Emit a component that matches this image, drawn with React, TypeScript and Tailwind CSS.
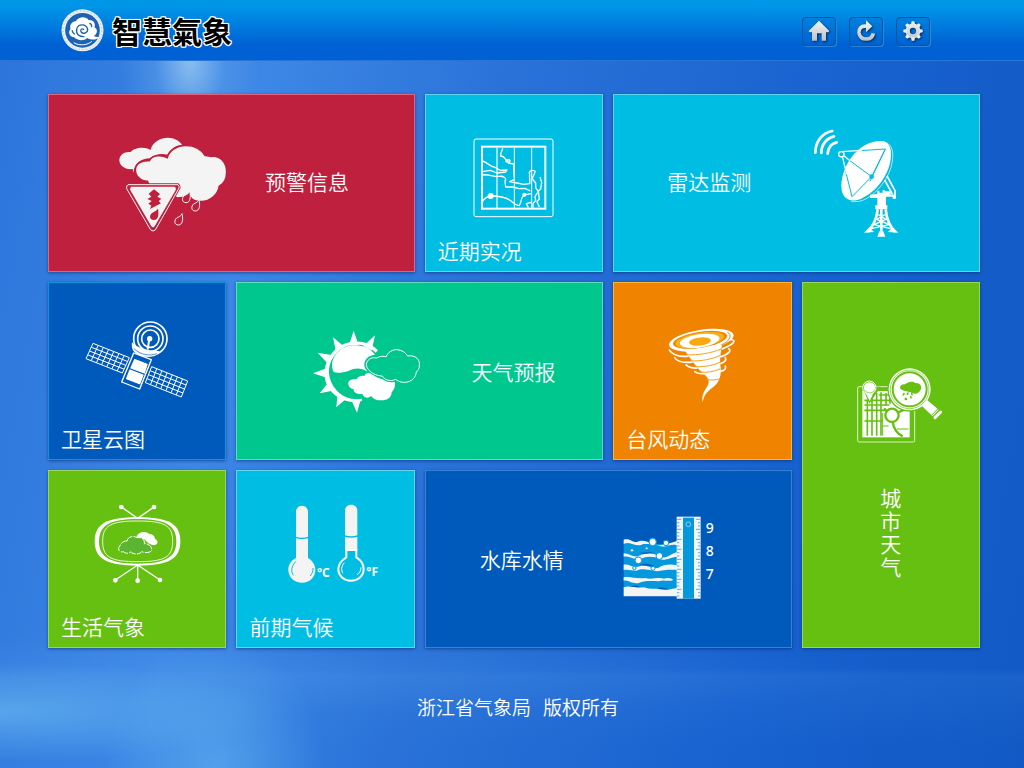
import type { ReactNode } from "react";

/* ---------- geometry helpers ---------- */

function meshPath(
  [ox, oy]: number[],
  [ux, uy]: number[],
  [vx, vy]: number[],
  cols: number,
  rows: number
) {
  let d = "";
  for (let i = 0; i <= cols; i++) {
    const t = i / cols;
    d += `M${ox + ux * t} ${oy + uy * t}l${vx} ${vy}`;
  }
  for (let j = 0; j <= rows; j++) {
    const t = j / rows;
    d += `M${ox + vx * t} ${oy + vy * t}l${ux} ${uy}`;
  }
  return d;
}

function rayPath(cx: number, cy: number, r: number, half: number, tips: number[][]) {
  return tips
    .map(([x, y]) => {
      const a = Math.atan2(y - cy, x - cx);
      const bx = cx + Math.cos(a) * r;
      const by = cy + Math.sin(a) * r;
      const px = -Math.sin(a) * half;
      const py = Math.cos(a) * half;
      return `M${x} ${y}L${bx + px} ${by + py}L${bx - px} ${by - py}Z`;
    })
    .join("");
}

/* ---------- header drawings ---------- */

function Emblem() {
  return (
    <svg viewBox="64 23 128 129" className="h-[43px] w-[43px]" aria-hidden="true">
      <circle cx="128" cy="87" r="63" fill="#e9eef2" />
      <circle cx="128" cy="87" r="58" fill="none" stroke="#b4c3cf" strokeWidth="3" strokeDasharray="4 7" />
      <circle cx="128" cy="87" r="52" fill="#1c63b4" />
      <path
        fill="#fff"
        d="M103 108C88 106 84 92 92 83C88 68 100 60 108 60C116 44 140 44 146 56C162 54 168 68 164 78C176 84 172 100 162 104C168 108 176 108 180 106C168 118 154 116 142 110C132 120 112 118 103 108Z"
      />
      <path
        fill="none"
        stroke="#1c63b4"
        strokeWidth="4"
        strokeLinecap="round"
        d="M131 84C126 80 120 86 124 92C130 100 146 94 143 82C139 68 116 66 111 82C107 98 118 106 132 106M97 88C98 94 100 96 104 98M150 66C154 68 156 72 155 76"
      />
      <path fill="none" stroke="#fff" strokeWidth="3" d="M102 124C120 135 144 131 156 120" />
    </svg>
  );
}

function ToolIcon({ view, children }: { view: string; children: ReactNode }) {
  return (
    <svg viewBox={view} className="h-[22px] w-[22px] drop-shadow-[1px_1px_1px_#00000099]" aria-hidden="true">
      <defs>
        <linearGradient id="metal" gradientUnits="userSpaceOnUse" x1="0" y1="48" x2="0" y2="110">
          <stop offset="0" stopColor="#f4f4f4" />
          <stop offset="1" stopColor="#bcc0c6" />
        </linearGradient>
      </defs>
      {children}
    </svg>
  );
}

function HomeIcon() {
  return (
    <ToolIcon view="54 46 66 66">
      <path fill="url(#metal)" d="M87 48L118 79L115 83H108V108H95V86H81V108H66V83H59L56 79Z" />
    </ToolIcon>
  );
}

function ReloadIcon() {
  return (
    <ToolIcon view="195 46 66 66">
      <path fill="none" stroke="url(#metal)" strokeWidth="11" d="M231 65C213 61 206 74 207 84C209 98 219 103 229 103C241 103 248 96 250 86" />
      <path fill="url(#metal)" d="M228 47L247 65L228 83Z" />
    </ToolIcon>
  );
}

function GearIcon() {
  return (
    <ToolIcon view="335 46 66 66">
      <circle cx="368" cy="79" r="16" fill="none" stroke="url(#metal)" strokeWidth="13" />
      {[0, 45, 90, 135, 180, 225, 270, 315].map((a) => (
        <path key={a} fill="url(#metal)" d="M362 60L364 50H372L374 60Z" transform={`rotate(${a} 368 79)`} />
      ))}
    </ToolIcon>
  );
}

/* ---------- tile drawings ---------- */

const DROP = "M10-17C14 0 12 17-1 17C-14 17-14 2-6-4C2-8 8-11 10-17Z";

function WarningArt() {
  return (
    <svg viewBox="57 51 324 288" className="h-[96px] w-[108px] shrink-0" aria-hidden="true">
      <path
        fill="#f4f4f4"
        d="M98 147C76 150 58 138 58 121C58 104 74 94 92 96C102 82 134 78 152 90C156 66 182 53 204 53C222 53 238 62 246 74C226 76 210 88 202 104C186 100 164 102 150 115C124 116 104 128 100 158Z"
      />
      <path
        fill="#f4f4f4"
        stroke="#bf203e"
        strokeWidth="5"
        d="M106 150C106 131 124 120 148 122C156 106 184 102 201 113C208 92 230 76 258 76C286 76 304 88 315 106C322 105 330 110 334 109C360 105 380 127 380 156C380 178 369 193 358 199C354 225 330 244 304 245C286 245 274 238 270 230C256 234 246 232 232 234L148 194C142 190 146 188 142 184C122 184 106 168 106 150Z"
      />
      <path
        fill="#bf203e"
        stroke="#bf203e"
        strokeWidth="8"
        d="M84 194H234Q240 200 236 206L166 330Q159 336 152 330L80 206Q78 196 84 194Z"
      />
      <path
        fill="#bf203e"
        stroke="#f4f4f4"
        strokeWidth="3"
        d="M84 194H234Q240 200 236 206L166 330Q159 336 152 330L80 206Q78 196 84 194Z"
      />
      <path fill="#f4f4f4" d="M94 200H224Q230 204 226 212L164 319Q159 325 154 319L92 212Q88 204 94 200Z" />
      <path fill="#bf203e" d="M162 208L180 222L172 230L184 236L176 244L183 250L150 267L154 257L145 251L155 243L142 237L154 230L146 221Z" />
      <path fill="#bf203e" d="M174 266C177 280 176 300 162 300C148 300 147 286 156 279C164 274 170 272 174 266Z" />
      {[
        [259, 231],
        [287, 256],
        [236, 298],
      ].map(([x, y]) => (
        <path key={x} d={DROP} transform={`translate(${x} ${y})`} fill="#bf203e" stroke="#f4f4f4" strokeWidth="3" />
      ))}
    </svg>
  );
}

function MapArt() {
  return (
    <svg viewBox="144 53 243 240" className="h-[80px] w-[81px]" fill="none" stroke="#fff" aria-hidden="true">
      <rect x="147" y="56" width="237" height="233" rx="6" strokeWidth="3" />
      <rect x="171" y="79" width="190" height="186" strokeWidth="6" />
      <path d="M216 82V263" strokeWidth="5" opacity=".7" />
      <path d="M268 82V263M320 82V263" strokeWidth="3" />
      <g strokeWidth="4" strokeLinejoin="round">
        <path d="M233 84C232 92 224 100 228 108C240 106 238 118 246 120C256 114 258 122 250 128L266 131V150L268 172" />
        <path d="M172 122C188 126 196 140 208 140L226 150L246 149L242 155L216 158L196 150L172 154" />
        <path d="M172 164C190 160 204 170 222 168C236 166 246 174 240 182L242 200L264 200L282 205L300 204L316 212" />
        <path d="M268 178L254 184L276 188L296 192L314 190C316 180 312 172 314 162C310 152 320 148 330 152C332 160 322 166 322 176L332 188V202L340 214L330 228L332 240L324 250V262" />
        <path d="M345 170L350 186L347 206L340 212L343 236L336 244L343 260M318 246L304 250L310 262" />
        <path d="M172 244C180 230 190 226 206 227C226 228 240 230 252 238C264 244 268 256 282 256C290 250 286 230 298 224L318 220" />
      </g>
      <circle cx="197" cy="227" r="9" fill="#fff" stroke="none" />
      <circle cx="298" cy="223" r="6" fill="#fff" stroke="none" />
      <circle cx="246" cy="122" r="5" fill="#fff" stroke="none" />
    </svg>
  );
}

function RadarArt() {
  return (
    <svg viewBox="489 55 258 324" className="h-[108px] w-[86px] shrink-0" aria-hidden="true">
      <g fill="none" stroke="#fff" strokeWidth="8" strokeLinecap="round">
        <path d="M496 126C496 92 518 66 547 61" />
        <path d="M514 127C514 102 530 82 552 77" />
        <path d="M533 129C534 112 544 99 560 95" />
      </g>
      <path
        fill="#fff"
        d="M686 91C714 88 728 108 722 146C716 196 676 246 634 264C606 276 580 268 575 238C570 204 586 160 612 130C634 106 660 93 686 91Z"
      />
      <path fill="none" stroke="#fff" strokeWidth="2" d="M700 93C724 98 732 118 727 152C720 202 678 254 636 270C622 274 610 274 602 271" />
      <g fill="none" stroke="#00bde4" strokeWidth="3">
        <path d="M612 121L706 115L665 198L606 258L575 136M578 134L665 198M706 115L660 212" />
      </g>
      <path fill="none" stroke="#fff" strokeWidth="4" d="M574 123L636 119M577 137L590 190M580 134L600 150" />
      <circle cx="574" cy="131" r="8" fill="#00bde4" stroke="#fff" strokeWidth="4" />
      <circle cx="665" cy="198" r="7" fill="#00bde4" />
      <path fill="none" stroke="#fff" strokeWidth="5" d="M711 196L735 240V262M704 208L728 252" />
      <path fill="#fff" d="M660 252L682 250V240H688V246H698V238H704V242H722V252H738V264H728V258H708V284H712V296H676V284H682V262H660Z" />
      <path fill="none" stroke="#fff" strokeWidth="8" d="M683 296C680 328 666 350 652 364M707 296C710 328 722 350 736 364M694 296V374" />
      <path fill="none" stroke="#fff" strokeWidth="4" d="M682 310L708 326L672 342L722 354M708 310L680 326L718 342L664 354" />
      <path fill="#fff" d="M642 366L658 350L672 364ZM682 378L688 362H700L706 378ZM714 364L728 350L745 366Z" />
    </svg>
  );
}

function SatelliteArt() {
  return (
    <svg viewBox="110 62 312 234" className="h-[78px] w-[104px]" aria-hidden="true">
      <g fill="none" stroke="#fff" strokeWidth="3">
        <path d={meshPath([134, 129], [109, 43], [-21, 46], 7, 4)} />
        <path d={meshPath([310, 199], [108, 43], [-19, 48], 7, 4)} />
      </g>
      <path fill="#005abb" stroke="#fff" strokeWidth="4" strokeLinejoin="round" d="M256 158L309 178L274 266L220 245Z" />
      <path fill="#fff" stroke="#fff" strokeWidth="4" strokeLinejoin="round" d="M259 178L296 192L288 218L248 203ZM245 209L284 224L274 250L235 235Z" />
      <circle cx="306" cy="115" r="50" fill="#005abb" stroke="#fff" strokeWidth="5" />
      <circle cx="306" cy="115" r="38" fill="none" stroke="#fff" strokeWidth="5" />
      <circle cx="306" cy="115" r="26" fill="none" stroke="#fff" strokeWidth="5" />
      <path fill="#fff" d="M251 126C268 144 304 154 334 152C326 178 268 174 254 150C250 142 250 134 251 126Z" />
      <path fill="none" stroke="#005abb" strokeWidth="2" d="M256 144C276 164 304 168 326 160" />
      <circle cx="304" cy="115" r="8" fill="#fff" />
      <path stroke="#fff" strokeWidth="6" d="M303 115L298 148" />
    </svg>
  );
}

function ForecastArt() {
  const cloud =
    "M262 138C266 124 282 116 294 117C308 118 318 124 326 136C350 132 364 148 361 164C362 174 356 180 352 184C350 206 330 216 314 215C302 215 296 210 290 206C276 214 256 208 250 196C232 196 206 184 202 164C202 148 216 138 232 142C244 136 254 136 262 138Z";
  return (
    <svg viewBox="42 58 324 249" className="h-[83px] w-[108px] shrink-0" aria-hidden="true">
      <path
        fill="#fff"
        d={rayPath(165, 185, 80, 15, [
          [164, 60],
          [228, 74],
          [102, 80],
          [56, 126],
          [42, 188],
          [62, 248],
          [112, 290],
          [174, 306],
        ])}
      />
      <circle cx="168" cy="185" r="82" fill="#00c78e" />
      <path fill="#fff" d="M237 119C204 84 142 82 104 121C64 166 68 226 114 258C138 273 164 277 189 271V264C160 268 138 262 120 246C84 212 80 166 110 130C142 94 196 92 230 126Z" />
      <path
        fill="#fff"
        d="M104 184C88 150 116 106 164 104C196 103 214 114 228 132C206 134 195 148 196 166C198 174 202 178 206 184C186 170 168 172 150 180C130 187 114 188 104 184Z"
      />
      <path
        fill="#fff"
        d="M148 220C146 208 160 204 172 206C178 196 190 194 196 196C200 188 210 184 218 188C232 202 246 206 256 206C264 216 276 216 288 214C288 224 288 236 278 244C278 262 262 270 246 269C230 270 222 262 216 256C206 266 194 260 190 250C176 252 162 246 164 236C154 234 148 228 148 220Z"
      />
      <path d={cloud} fill="#00c78e" stroke="#00c78e" strokeWidth="9" />
      <path d={cloud} fill="none" stroke="#fff" strokeWidth="3" />
    </svg>
  );
}

function TyphoonArt() {
  return (
    <svg viewBox="166 50 204 224" className="h-[75px] w-[68px]" aria-hidden="true">
      <path fill="#fff" d="M212 112L330 92C324 122 320 144 324 168C328 214 302 226 290 236C276 248 274 256 270 272C264 244 284 232 288 214C292 196 268 186 254 168C238 150 224 128 212 112Z" />
      <ellipse cx="266" cy="86" rx="98" ry="31" transform="rotate(-9 266 86)" fill="#fff" />
      <ellipse cx="262" cy="85" rx="82" ry="24" transform="rotate(-9 262 85)" fill="#f08300" />
      <ellipse cx="261" cy="86" rx="74" ry="22" transform="rotate(-9 261 86)" fill="#f9b01a" />
      <ellipse cx="261" cy="88" rx="60" ry="20" transform="rotate(-8 261 88)" fill="#fff" />
      <ellipse cx="262" cy="90" rx="33" ry="12" transform="rotate(-6 262 90)" fill="#f9a80f" />
      <path fill="none" stroke="#f08300" strokeWidth="3" d="M344 62C360 70 352 90 326 100" />
      <g fill="none" stroke="#f6a21a" strokeWidth="3">
        <path d="M222 130C256 132 300 124 326 112M234 148C266 150 300 142 322 132M248 166C278 166 302 162 322 152M262 182C284 184 306 180 322 172M282 204C296 206 310 206 322 202" />
      </g>
      <g fill="none" stroke="#fff" strokeWidth="5" strokeLinecap="round">
        <path d="M170 116C180 132 204 136 226 134M354 84C372 86 366 96 330 112" />
        <path d="M186 138C192 150 214 154 238 152M348 112C358 116 348 128 324 136" />
        <path d="M220 160C226 168 238 170 252 170M338 138C342 146 336 152 324 156" />
        <path d="M246 180C252 186 262 188 278 186M338 164C342 172 334 178 322 180" />
      </g>
    </svg>
  );
}

function CityArt() {
  return (
    <svg viewBox="53 52 258 228" className="h-[76px] w-[86px]" aria-hidden="true">
      <rect x="55" y="111" width="171" height="166" rx="4" fill="none" stroke="#d9f2c0" strokeWidth="3" />
      <rect x="69" y="124" width="142" height="139" fill="#fff" />
      <g stroke="#66c012" fill="none">
        <path strokeWidth="5" d="M84 150V258M98 135V258M112 130V258M125 128V258M140 130V168M152 140V162" />
        <path strokeWidth="5" d="M75 152H166M75 166H150M75 182H138M75 214H130M118 136H160" />
        <path strokeWidth="7" d="M196 180L176 188M160 216C162 238 176 254 190 260M134 176L142 184" />
        <path strokeWidth="3" d="M130 229H148M172 238H208M130 190V258" />
      </g>
      <circle cx="158" cy="197" r="20" fill="#fff" stroke="#66c012" strokeWidth="7" />
      <path fill="#66c012" d="M66 106L90 162L124 112Z" />
      <circle cx="90" cy="114" r="20" fill="#66c012" stroke="#fff" strokeWidth="3" />
      <path fill="#fff" d="M91 154L75 122C70 106 80 98 90 98C102 98 111 108 106 122Z" />
      <path fill="none" stroke="#66c012" strokeWidth="2" d="M77 122C82 132 100 132 105 122" />
      <circle cx="211" cy="119" r="67" fill="#66c012" />
      <circle cx="211" cy="119" r="63" fill="#fff" />
      <circle cx="211" cy="119" r="58" fill="none" stroke="#66c012" strokeWidth="2" />
      <circle cx="211" cy="119" r="51" fill="none" stroke="#66c012" strokeWidth="6" />
      <path fill="#66c012" d="M182 114C182 106 190 102 198 104C206 94 222 94 228 100C240 98 248 108 245 118C240 132 226 136 214 128C204 124 184 124 182 114Z" />
      <path stroke="#66c012" strokeWidth="5" strokeLinecap="round" d="M194 132L192 136M206 130L204 134M217 131L218 135M199 146L198 149M214 141L215 144M202 148L201 149" />
      <path fill="#fff" d="M247 168L263 151L298 180L280 200Z" />
      <path stroke="#66c012" strokeWidth="3" d="M276 198L298 175" />
      <path stroke="#fff" strokeWidth="9" strokeLinecap="round" d="M287 204L304 187" />
    </svg>
  );
}

function TvArt() {
  return (
    <svg viewBox="137 43 261 237" className="h-[79px] w-[87px]" aria-hidden="true">
      <path fill="none" stroke="#fff" strokeWidth="4" d="M219 52L268 86L317 52M201 271L268 226L335 271M268 226V272" />
      {[
        [219, 52],
        [317, 52],
        [201, 272],
        [268, 273],
        [335, 271],
      ].map(([x, y]) => (
        <circle key={`${x}-${y}`} cx={x} cy={y} r="7" fill="#fff" />
      ))}
      <path fill="#fff" d="M268 83C360 83 396 102 396 155C396 208 360 228 268 228C176 228 139 208 139 155C139 102 176 83 268 83Z" />
      <path fill="#66c012" d="M268 88C350 88 384 106 384 155C384 204 350 222 268 222C186 222 152 204 152 155C152 106 186 88 268 88Z" />
      <path fill="none" stroke="#fff" strokeWidth="2.5" d="M268 94C350 94 373 108 373 155C373 202 350 216 268 216C186 216 163 202 163 155C163 108 186 94 268 94Z" />
      <path fill="#fff" d="M264 142C270 126 292 122 304 134C312 132 320 140 320 148C330 152 330 164 320 166C306 166 296 158 290 150Z" />
      <path
        fill="#5cb531"
        stroke="#fff"
        strokeWidth="3"
        strokeDasharray="22 4"
        d="M236 154C238 140 256 138 266 144C280 142 290 150 288 162C302 162 312 172 310 182C306 190 290 190 280 186C276 194 254 196 248 186C240 194 228 190 226 186C214 190 206 178 214 170C218 158 228 154 236 154Z"
      />
    </svg>
  );
}

function ThermometerArt() {
  return (
    <svg viewBox="152 46 273 240" className="h-[80px] w-[91px]" aria-hidden="true">
      <path fill="#f4f4f4" d="M176 70C176 45 212 45 212 70V144Q194 150 176 144ZM176 149Q194 154 212 149V208C222 214 234 226 234 243C234 266 216 282 194 282C172 282 153 266 153 243C153 226 164 214 176 208Z" />
      <path fill="none" stroke="#00bde4" strokeWidth="3" d="M176 218C162 232 160 248 168 260M227 238C228 248 224 256 218 262" />
      <path fill="#f4f4f4" d="M323 66C323 42 360 42 360 66V140Q342 146 323 140ZM323 145Q342 150 360 145V186H323Z" />
      <path
        fill="#00bde4"
        stroke="#fff"
        strokeWidth="6"
        strokeLinejoin="round"
        d="M327 184H357V206C370 214 379 226 379 241C379 262 362 276 341 276C320 276 303 262 303 241C303 226 314 214 327 206Z"
      />
      <path fill="none" stroke="#fff" strokeWidth="3" d="M321 222C311 234 311 246 317 254M371 236C371 247 366 254 359 258" />
      <text x="239" y="264" fill="#fff" fontSize="36" fontWeight="700" fontFamily="'Noto Sans', sans-serif">
        °C
      </text>
      <text x="387" y="261" fill="#fff" fontSize="36" fontWeight="700" fontFamily="'Noto Sans', sans-serif">
        °F
      </text>
    </svg>
  );
}

function WaterArt() {
  const ticks = Array.from({ length: 24 }, (_, i) => {
    const y = 56 + i * 10;
    const w = i % 3 === 0 ? 13 : 7;
    return `M651 ${y}h${w}M721 ${y}h${-w}`;
  }).join("");
  return (
    <svg viewBox="489 46 234 249" className="h-[83px] w-[78px] shrink-0" aria-hidden="true">
      <path fill="#0598dc" d="M491 130H651V266H491Z" />
      <g fill="#f4f4f4">
        <path d="M491 117C512 112 516 126 530 124C548 116 560 122 574 128C600 140 620 130 651 121V134C630 128 622 142 600 136C580 130 568 130 550 130C530 142 512 122 491 130Z" />
        <path d="M491 158C508 158 520 172 536 166C560 156 580 156 600 168C620 178 632 158 651 155V168C630 170 620 180 600 176C580 166 560 166 540 176C520 176 506 166 491 168Z" />
        <path d="M491 192C510 190 516 202 534 198C556 190 572 204 594 202C614 190 632 190 651 194V208C630 206 610 208 590 212C566 208 546 202 530 210C514 210 506 206 491 208Z" />
        <path d="M491 230C512 226 530 236 556 232C574 238 596 228 612 234C624 230 636 234 640 238C624 244 610 236 596 242C570 240 550 240 534 248C512 248 504 238 491 240Z" />
        <path d="M491 260C510 252 526 264 552 260C572 268 590 262 604 266C622 270 636 264 651 262V287H491Z" />
      </g>
      <g fill="#005abb">
        <path d="M538 154C550 158 562 152 580 156L548 160ZM540 192C556 186 570 190 588 198L552 194ZM508 258L530 254L540 260ZM590 262C606 258 616 262 628 266L600 266Z" />
      </g>
      <g fill="#fff" stroke="#0598dc" strokeWidth="3">
        <circle cx="578" cy="124" r="11" />
        <circle cx="618" cy="127" r="8" />
        <circle cx="598" cy="166" r="10" />
        <circle cx="535" cy="179" r="10" />
        <circle cx="516" cy="149" r="5" />
        <circle cx="560" cy="143" r="4" />
        <circle cx="523" cy="202" r="5" />
        <circle cx="579" cy="203" r="6" />
      </g>
      <rect x="650" y="48" width="72" height="246" fill="#f4f4f4" />
      <rect x="669" y="51" width="33" height="243" fill="#0598dc" />
      <path d={ticks} stroke="#4db5e4" strokeWidth="3" />
      <circle cx="685" cy="71" r="7" fill="none" stroke="#bfe6f7" strokeWidth="2" />
    </svg>
  );
}

/* ---------- tiles ---------- */

const TILE =
  "border shadow-[0_1px_3px_#00206088] outline-none hover:brightness-110 focus-visible:ring-2 focus-visible:ring-white";
const LABEL = "text-[21px] leading-[21px] whitespace-nowrap";

function WideTile({ tone, children }: { tone: string; children: ReactNode }) {
  return (
    <a href="#" className={`${TILE} ${tone} col-span-2 flex items-center`}>
      {children}
    </a>
  );
}

function SquareTile({ tone, label, children }: { tone: string; label: string; children: ReactNode }) {
  return (
    <a href="#" className={`${TILE} ${tone} flex flex-col px-3 pb-[10px]`}>
      <span className="flex flex-1 items-center justify-center">{children}</span>
      <span className={LABEL}>{label}</span>
    </a>
  );
}

const TOOLS = [
  { name: "首页", icon: <HomeIcon /> },
  { name: "刷新", icon: <ReloadIcon /> },
  { name: "设置", icon: <GearIcon /> },
];

export default function App() {
  return (
    <div className="flex min-h-screen flex-col bg-[radial-gradient(ellipse_70px_120px_at_190px_60px,#b4dcf5aa,#7ab8ee44_50%,transparent),radial-gradient(ellipse_280px_50px_at_0px_712px,#69b8f0aa,transparent),radial-gradient(ellipse_110px_130px_at_215px_768px,#5fb0efaa,transparent),radial-gradient(ellipse_700px_40px_at_200px_675px,#5fa5ee33,transparent),linear-gradient(to_bottom,transparent_87%,#4f98e822_88%,transparent_97%),linear-gradient(100deg,#2c74da_0%,#3d87e6_24%,#2a72d8_45%,#1762cf_75%,#1259c4_100%)] font-['Noto_Sans_CJK_SC',sans-serif] font-[350] text-white">
      <header className="flex h-[61px] items-center justify-between border-b border-[#2a74d6] bg-linear-to-b from-[#0096e8] from-10% to-[#0061d4] to-75% pr-[94px] pl-[61px]">
        <div className="flex items-center gap-2">
          <Emblem />
          <h1 className="text-[30px] leading-10 font-bold text-black [text-shadow:1px_0_#fff,-1px_0_#fff,0_1px_#fff,0_-1px_#fff,1px_1px_#fff,-1px_-1px_#fff,1px_-1px_#fff,-1px_1px_#fff,0_0_2px_#fff]">
            智慧氣象
          </h1>
        </div>
        <nav className="flex gap-[13px] pt-[2px]">
          {TOOLS.map((tool) => (
            <button
              key={tool.name}
              type="button"
              aria-label={tool.name}
              className="flex h-[29px] w-[34px] items-center justify-center rounded-sm border border-[#0a559f] bg-[#0060c022] shadow-[1px_1px_0_#2f84da]"
            >
              {tool.icon}
            </button>
          ))}
        </nav>
      </header>

      <main className="grid auto-rows-[178px] grid-cols-5 gap-[10px] pt-[33px] pr-11 pl-12">
        <WideTile tone="bg-[#bf203e] border-[#e2647c]">
          <span className="pt-1 pr-[38px] pl-[70px]">
            <WarningArt />
          </span>
          <span className={`${LABEL} pb-1`}>预警信息</span>
        </WideTile>
        <SquareTile tone="bg-[#00bde4] border-[#5fd6ef]" label="近期实况">
          <span className="pt-5">
            <MapArt />
          </span>
        </SquareTile>
        <WideTile tone="bg-[#00bde4] border-[#5fd6ef]">
          <span className={`${LABEL} pr-[62px] pb-1 pl-[53px]`}>雷达监测</span>
          <RadarArt />
        </WideTile>

        <SquareTile tone="bg-[#005abb] border-[#0f92de]" label="卫星云图">
          <span className="pt-2">
            <SatelliteArt />
          </span>
        </SquareTile>
        <WideTile tone="bg-[#00c78e] border-[#5fdcb8]">
          <span className="pr-[50px] pl-[76px]">
            <ForecastArt />
          </span>
          <span className={LABEL}>天气预报</span>
        </WideTile>
        <SquareTile tone="bg-[#f08300] border-[#fdb52c]" label="台风动态">
          <span className="pt-5">
            <TyphoonArt />
          </span>
        </SquareTile>
        <a
          href="#"
          className={`${TILE} row-span-2 flex flex-col items-center gap-[43px] border-[#98d65a] bg-[#66c012] pt-[84px]`}
        >
          <span className="pl-[18px]">
            <CityArt />
          </span>
          <span className="w-[21px] text-[21px] leading-[23px] break-all">城市天气</span>
        </a>

        <SquareTile tone="bg-[#66c012] border-[#98d65a]" label="生活气象">
          <TvArt />
        </SquareTile>
        <SquareTile tone="bg-[#00bde4] border-[#5fd6ef]" label="前期气候">
          <span className="pl-4">
            <ThermometerArt />
          </span>
        </SquareTile>
        <WideTile tone="bg-[#005abb] border-[#3482d4]">
          <span className={`${LABEL} pr-[59px] pl-[54px]`}>水库水情</span>
          <span className="pb-1">
            <WaterArt />
          </span>
          <span className="flex flex-col pb-[18px] pl-[5px] font-['Noto_Sans',sans-serif] text-sm leading-[23px] font-medium">
            <span>9</span>
            <span>8</span>
            <span>7</span>
          </span>
        </WideTile>
      </main>

      <footer className="flex justify-center gap-3 pt-[47px] pb-8 pl-3 text-[19px] leading-6">
        <span>浙江省气象局</span>
        <span>版权所有</span>
      </footer>
    </div>
  );
}
